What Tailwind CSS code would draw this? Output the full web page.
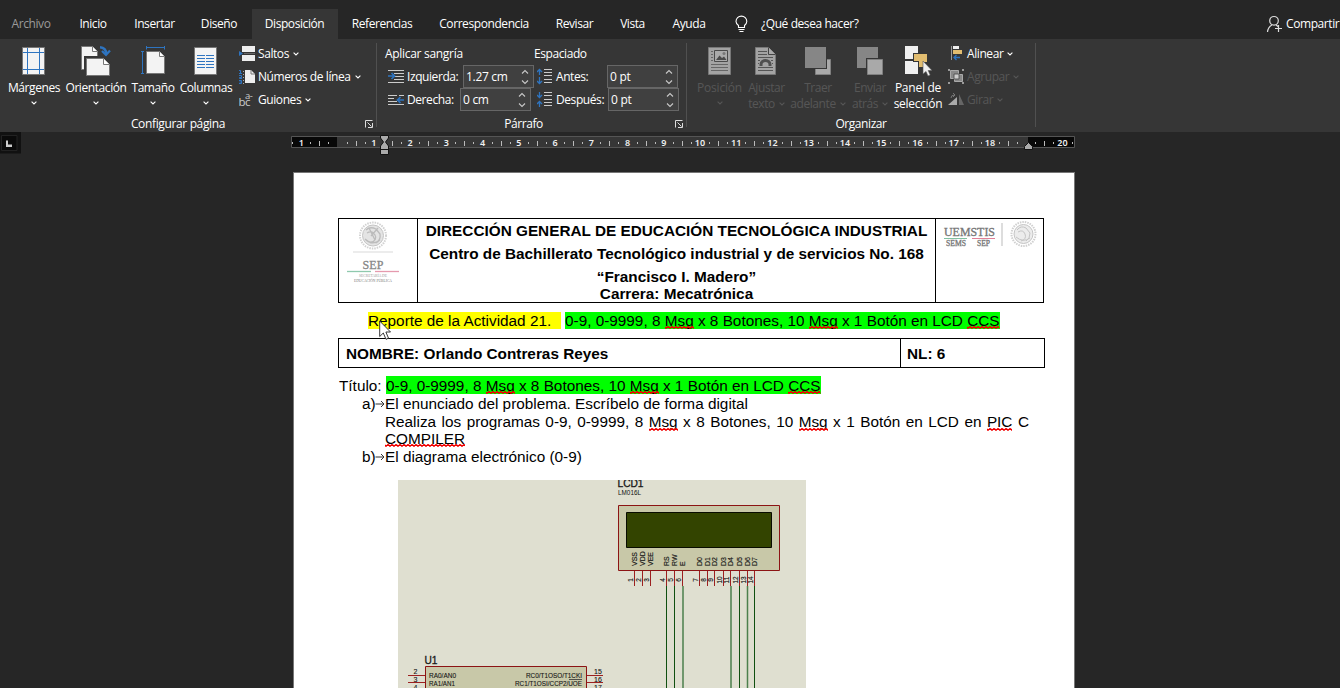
<!DOCTYPE html>
<html lang="es">
<head>
<meta charset="utf-8">
<title>Documento</title>
<script src="https://cdn.jsdelivr.net/npm/@tailwindcss/browser@4"></script>
</head>
<body class="h-[688px] w-[1340px] overflow-hidden bg-[#262626] font-['Open_Sans','Noto_Sans',sans-serif] text-[12px] leading-[16px] tracking-[-0.42px] text-white">
<svg width="0" height="0" class="absolute"><defs>
<symbol id="chev" viewBox="0 0 6 4"><path d="M.6 .6L3 3L5.4 .6" fill="none" stroke="currentColor" stroke-width="1.1"/></symbol>
<symbol id="launch" viewBox="0 0 8 8"><path d="M.5 7.500V.5H7.500M2.500 2.500L6.500 6.500M7.500 3V7.500H3" fill="none" stroke="#ddd"/></symbol>
<symbol id="spin" viewBox="0 0 8 16"><path d="M1 4.500L4 1.500L7 4.500M1 11.500L4 14.500L7 11.500" fill="none" stroke="#c8c8c8" stroke-width="1.1"/></symbol>
<pattern id="wave" width="4" height="3" patternUnits="userSpaceOnUse"><path d="M-1 0L1 2.400L3 .4L5 2.400" fill="none" stroke="#f00000" stroke-width="1.2"/></pattern>
</defs></svg>

<!-- Pestañas -->
<nav class="flex h-[39px] items-stretch pt-[9px] text-center leading-[30px] whitespace-nowrap">
<div class="mr-[2px] w-[63px] pr-px text-[#9a9a9a]">Archivo</div>
<div class="w-[57px] pr-px">Inicio</div>
<div class="w-[65px]">Insertar</div>
<div class="w-[65px] pr-px">Diseño</div>
<div class="w-[86px] bg-[#363636] pr-px">Disposición</div>
<div class="w-[88px]">Referencias</div>
<div class="w-[116px]">Correspondencia</div>
<div class="w-[65px]">Revisar</div>
<div class="w-[51px]">Vista</div>
<div class="w-[62px]">Ayuda</div>
<svg class="ml-[14px] mt-[6px] h-[18px] w-[14px] shrink-0" viewBox="734 15 14 18" fill="none" stroke="#fff" stroke-width="1.1"><path d="M738.500 27.500V25.500Q736 23.500 736 21.500A5.300 5.300 0 0 1 746.800 21.500Q746.800 23.500 744.500 25.500V27.500ZM738.500 29.500H744.500M739.500 31.500H743.500"/></svg>
<div class="ml-[13px]">¿Qué desea hacer?</div>
<div class="ml-auto flex w-[74px]">
<svg class="mt-[6px] h-[18px] w-[16px] shrink-0" viewBox="1266 15 16 18" fill="none" stroke="#ddd" stroke-width="1.2"><circle cx="1274" cy="20.800" r="4.300"/><path d="M1267.500 32Q1268 27 1272 25M1276 25L1278 26.500M1275 28.500H1282M1278.500 25V32"/></svg>
<div class="ml-[4px]">Compartir</div>
</div>
</nav>

<!-- Cinta -->
<section class="flex h-[93px] bg-[#363636] whitespace-nowrap">
<div class="relative flex w-[377px] flex-col">
<div class="flex h-[76px] pl-[5px]">
<div class="flex w-[58px] flex-col items-center pt-[5px]">
<svg class="h-[34px] w-[28px]" viewBox="20 44 28 34"><path d="M22.500 47.500H44.500V74.500H22.500Z" fill="#f3f3f3" stroke="#777"/><path d="M27.500 48V74M39.500 48V74M23 52.500H44M23 69.500H44" stroke="#2e74c0"/></svg>
<span class="mt-[2px]">Márgenes</span><svg class="mt-[5px] h-[4px] w-[6px]"><use href="#chev"/></svg></div>
<div class="flex w-[66px] flex-col items-center pt-[5px]">
<svg class="h-[34px] w-[34px]" viewBox="79 44 34 34"><path d="M81.500 46.500H92.500L97.500 51.500V69.500H81.500Z" fill="#f3f3f3" stroke="#777"/><path d="M92.500 46.500V51.500H97.500" fill="#fff" stroke="#777"/><path d="M85.500 57.500H104.500L110.500 63.500V76.500H85.500Z" fill="#f3f3f3" stroke="#363636" stroke-width="3"/><path d="M86.500 58.500H103.500L109.500 64.500V75.500H86.500Z" fill="#f3f3f3" stroke="#777"/><path d="M103.500 58.500V64.500H109.500" fill="#fff" stroke="#777"/><path d="M100 47.200Q106 47.500 106.200 54" fill="none" stroke="#2e74c0" stroke-width="2.600"/><path d="M102 51L106 55L110 50.500" fill="none" stroke="#2e74c0" stroke-width="2.200"/></svg>
<span class="mt-[2px]">Orientación</span><svg class="mt-[5px] h-[4px] w-[6px]"><use href="#chev"/></svg></div>
<div class="flex w-[48px] flex-col items-center pt-[5px]">
<svg class="h-[34px] w-[28px]" viewBox="139 44 28 34"><path d="M146.500 51.500H159.500L164.500 56.500V73.500H146.500Z" fill="#f3f3f3" stroke="#777"/><path d="M159.500 51.500V56.500H164.500" fill="#fff" stroke="#777"/><path d="M146.500 46V49.500M164.500 46V49.500M146 47.500H165M141 51.500H144M141 73.500H144M142.500 51V74" stroke="#2e74c0" fill="none"/></svg>
<span class="mt-[2px]">Tamaño</span><svg class="mt-[5px] h-[4px] w-[6px]"><use href="#chev"/></svg></div>
<div class="flex w-[58px] flex-col items-center pt-[5px]">
<svg class="h-[34px] w-[28px]" viewBox="192 44 28 34"><path d="M194.500 47.500H216.500V74.500H194.500Z" fill="#f3f3f3" stroke="#777"/><path d="M197 55.500H205M206 55.500H214M197 58.500H205M206 58.500H214M197 61.500H205M206 61.500H214M197 64.500H205M206 64.500H214M197 67.500H205M206 67.500H214" stroke="#2e74c0"/></svg>
<span class="mt-[2px]">Columnas</span><svg class="mt-[5px] h-[4px] w-[6px]"><use href="#chev"/></svg></div>
<div class="ml-[4px] flex flex-col pt-[3px]">
<div class="flex h-[23px] items-center"><svg class="h-[18px] w-[17px]" viewBox="239 44 17 18"><path d="M242 45H255V51H242ZM242 54H255V60H242Z" fill="#eee"/><path d="M239 50L243 52.500L239 55Z" fill="#2e74c0"/><path d="M244 52.500H255" stroke="#666"/></svg><span class="ml-[2px]">Saltos</span><svg class="ml-[4px] h-[4px] w-[6px]"><use href="#chev"/></svg></div>
<div class="flex h-[23px] items-center"><svg class="h-[18px] w-[17px]" viewBox="239 67 17 18"><path d="M245 69H251L255 73V82H245Z" fill="#eee"/><path d="M251 69V73H255" fill="none" stroke="#777"/><path d="M239 69.500H240.500V73M239 72.500H242M239 74.500H241.500V76.500H239.500V77.500H242M239 79.500H241.500V82.500H239M239.500 81H241" fill="none" stroke="#2e74c0"/><path d="M243.500 70V83" stroke="#aaa" stroke-dasharray="1 2"/></svg><span class="ml-[2px]">Números de línea</span><svg class="ml-[4px] h-[4px] w-[6px]"><use href="#chev"/></svg></div>
<div class="flex h-[23px] items-center"><svg class="h-[18px] w-[17px]" viewBox="239 90 17 18" fill="#ccc" font-family="Open Sans"><text x="238.500" y="105" font-size="11.500">bc</text><text x="245" y="98" font-size="9.500">a-</text></svg><span class="ml-[2px]">Guiones</span><svg class="ml-[4px] h-[4px] w-[6px]"><use href="#chev"/></svg></div>
</div>
</div>
<div class="flex h-[17px] items-center"><span class="w-[356px] text-center tracking-[-0.36px]">Configurar página</span><svg class="ml-[9px] h-[8px] w-[8px]"><use href="#launch"/></svg></div>
<div class="absolute right-0 top-[4px] h-[84px] w-px bg-[#505050]"></div>
</div>

<div class="relative flex w-[310px] flex-col">
<div class="flex h-[76px] pl-[8px] pt-[3px]">
<div class="w-[149px]">
<div class="h-[23px] leading-[23px] tracking-[-0.3px]">Aplicar sangría</div>
<div class="flex h-[23px] items-center pl-[3px]"><svg class="h-[16px] w-[17px]" viewBox="388 68 17 16"><path d="M388 69.500H404M394 72.500H404M394 75.500H404M394 78.500H404M388 81.500H404" stroke="#ccc"/><path d="M388 75H394M391.500 72L394.500 75L391.500 78" fill="none" stroke="#2e74c0" stroke-width="1.700"/></svg><span class="ml-[2px] w-[56px]">Izquierda:</span><span class="flex h-[23px] w-[71px] items-center justify-between border border-[#666] bg-[#404040] pl-[2px] pr-[4px] tracking-[-0.3px]"><span>1.27 cm</span><svg class="h-[16px] w-[8px]"><use href="#spin"/></svg></span></div>
<div class="flex h-[23px] items-center pl-[3px]"><svg class="h-[16px] w-[17px]" viewBox="388 91 17 16"><path d="M388 94.500H397M388 97.500H394M388 100.500H397M388 103.500H404M399 94.500H404" stroke="#ccc"/><path d="M398 99H404M400.500 96L397.500 99L400.500 102" fill="none" stroke="#2e74c0" stroke-width="1.700"/></svg><span class="ml-[2px] w-[53px]">Derecha:</span><span class="flex h-[23px] w-[71px] items-center justify-between border border-[#666] bg-[#404040] pl-[2px] pr-[4px] tracking-[-0.3px]"><span>0 cm</span><svg class="h-[16px] w-[8px]"><use href="#spin"/></svg></span></div>
</div>
<div class="w-[150px]">
<div class="h-[23px] leading-[23px]">Espaciado</div>
<div class="flex h-[23px] items-center pl-[3px]"><svg class="h-[18px] w-[17px]" viewBox="537 67 17 18"><path d="M544 68.500H552M544 71.500H552M544 74.500H552M544 78.500H552M544 81.500H552" stroke="#ccc"/><path d="M539.500 74V68M537 71L539.500 68.500L542 71M539.500 76V83M537 80L539.500 82.500L542 80" fill="none" stroke="#2e74c0" stroke-width="1.300"/></svg><span class="ml-[2px] w-[51px]">Antes:</span><span class="flex h-[23px] w-[71px] items-center justify-between border border-[#666] bg-[#404040] pl-[2px] pr-[4px] tracking-[-0.3px]"><span>0 pt</span><svg class="h-[16px] w-[8px]"><use href="#spin"/></svg></span></div>
<div class="flex h-[23px] items-center pl-[3px]"><svg class="h-[18px] w-[17px]" viewBox="537 90 17 18"><path d="M544 91.500H552M544 94.500H552M544 98.500H552M544 101.500H552M544 104.500H552" stroke="#ccc"/><path d="M539.500 91V97M537 94L539.500 96.500L542 94M539.500 106V100M537 103L539.500 100.500L542 103" fill="none" stroke="#2e74c0" stroke-width="1.300"/></svg><span class="ml-[2px] w-[52px]">Después:</span><span class="flex h-[23px] w-[71px] items-center justify-between border border-[#666] bg-[#404040] pl-[2px] pr-[4px] tracking-[-0.3px]"><span>0 pt</span><svg class="h-[16px] w-[8px]"><use href="#spin"/></svg></span></div>
</div>
</div>
<div class="flex h-[17px] items-center"><span class="w-[293px] text-center">Párrafo</span><svg class="ml-[5px] h-[8px] w-[8px]"><use href="#launch"/></svg></div>
<div class="absolute right-0 top-[4px] h-[84px] w-px bg-[#505050]"></div>
</div>

<div class="relative flex w-[349px] flex-col">
<div class="flex h-[76px] pl-[8px] text-[#565656]">
<div class="flex w-[49px] flex-col items-center pt-[5px]">
<svg class="h-[34px] w-[28px]" viewBox="706 44 28 34"><path d="M708.500 47.500H730.500V74.500H708.500Z" fill="#a3a3a3" stroke="#787878"/><path d="M714.500 50.500H727.500V61.500H714.500Z" fill="#aaa" stroke="#4a4a4a"/><path d="M716 60L719.500 55.500L722 58L724 56.500L726.500 60Z" fill="#4a4a4a"/><circle cx="724" cy="53.500" r="1.500" fill="#777"/><path d="M711 51.500H713M711 54.500H713M711 57.500H713M711 60.500H713M711 64.500H728M711 67.500H728M711 70.500H728" stroke="#666"/></svg>
<span class="mt-[2px] tracking-[-0.2px]">Posición</span><svg class="mt-[5px] h-[4px] w-[6px]"><use href="#chev"/></svg></div>
<div class="flex w-[45px] flex-col items-center pt-[5px]">
<svg class="h-[34px] w-[28px]" viewBox="753 44 28 34"><path d="M755.500 47.500H768.500L775.500 54.500V74.500H755.500Z" fill="#a3a3a3" stroke="#787878"/><path d="M768.500 47.500V54.500H775.500" fill="#aaa" stroke="#444"/><path d="M758 51.500H767M758 54.500H767M758 57.500H773M758 60.500H760M771 60.500H773M758 63.500H759M772 63.500H773M758 67.500H773M758 70.500H773" stroke="#555"/><path d="M761 66V64.500A4.500 4 0 0 1 770 64.500V66" fill="none" stroke="#505050" stroke-width="3"/></svg>
<span class="mt-[2px]">Ajustar</span><span class="flex items-center gap-[4px]">texto<svg class="h-[4px] w-[6px]"><use href="#chev"/></svg></span></div>
<div class="flex w-[58px] flex-col items-center pt-[5px]">
<svg class="h-[34px] w-[28px]" viewBox="804 44 28 34"><path d="M815.500 59.500H830.500V74.500H815.500Z" fill="#a9a9a9" stroke="#808080"/><path d="M804 46H827V69H804Z" fill="#363636"/><path d="M805 47H826V68H805Z" fill="#868686"/></svg>
<span class="mt-[2px]">Traer</span><span class="flex items-center gap-[4px]">adelante<svg class="h-[4px] w-[6px]"><use href="#chev"/></svg></span></div>
<div class="flex w-[46px] flex-col items-center pt-[5px]">
<svg class="h-[34px] w-[28px]" viewBox="856 44 28 34"><path d="M857 47H878V68H857Z" fill="#868686"/><path d="M866 58H884V76H866Z" fill="#363636"/><path d="M867.500 59.500H882.500V74.500H867.500Z" fill="#a9a9a9" stroke="#808080"/></svg>
<span class="mt-[2px]">Enviar</span><span class="flex items-center gap-[4px]">atrás<svg class="h-[4px] w-[6px]"><use href="#chev"/></svg></span></div>
<div class="flex w-[50px] flex-col items-center pt-[5px] text-white">
<svg class="h-[34px] w-[28px]" viewBox="904 44 28 34"><path d="M905 46H918V59H905ZM905 61H918V74H905Z" fill="#f0f0f0"/><path d="M913 53H928V63H925V68H918V62H913Z" fill="#363636"/><path d="M914 54H927V62H924V67H919V61H914Z" fill="#e2bd70"/><path d="M923 61V74L926 71.500L928 76L930.200 75L928.200 70.500H932Z" fill="#f0f0f0" stroke="#555" stroke-width=".6"/></svg>
<span class="mt-[2px] tracking-[-0.25px]">Panel de</span><span class="tracking-[-0.3px]">selección</span></div>
<div class="ml-[5px] flex flex-col pt-[3px]">
<div class="flex h-[23px] items-center text-white"><svg class="h-[18px] w-[17px]" viewBox="948 45 17 18"><path d="M951.500 46V60" stroke="#999"/><path d="M953 46H959V49H953Z" fill="#eee"/><path d="M953 50H962V54H953Z" fill="#e2bd70"/><path d="M954 57.500H960M956.500 55L954 57.500L956.500 60" fill="none" stroke="#2e74c0" stroke-width="1.300"/></svg><span class="ml-[2px]">Alinear</span><svg class="ml-[4px] h-[4px] w-[6px]"><use href="#chev"/></svg></div>
<div class="flex h-[23px] items-center"><svg class="h-[18px] w-[17px]" viewBox="948 67 17 18"><path d="M948 68H950V70H948ZM962 68H964V70H962ZM948 81H950V83H948ZM962 81H964V83H962Z" fill="#999"/><path d="M950.500 69.500H958.500V77.500H950.500Z" fill="#888" stroke="#aaa"/><path d="M954.500 73.500H962.500V80.500H954.500Z" fill="#888" stroke="#aaa"/><path d="M954 73H959V78H954Z" fill="#ccc" stroke="#444" stroke-width=".8"/></svg><span class="ml-[2px]">Agrupar</span><svg class="ml-[4px] h-[4px] w-[6px]"><use href="#chev"/></svg></div>
<div class="flex h-[23px] items-center"><svg class="h-[18px] w-[17px]" viewBox="948 90 17 18"><path d="M948 104L957 96V104Z" fill="#aaa"/><path d="M959 93V104H964Z" fill="#666"/><path d="M951 97Q951 94 954.500 94M953 92L955 94L953 96" fill="none" stroke="#777"/></svg><span class="ml-[2px]">Girar</span><svg class="ml-[4px] h-[4px] w-[6px]"><use href="#chev"/></svg></div>
</div>
</div>
<div class="flex h-[17px] items-center"><span class="w-[348px] text-center">Organizar</span></div>
<div class="absolute right-0 top-[4px] h-[84px] w-px bg-[#505050]"></div>
</div>
</section>

<!-- Regla -->
<div class="flex h-[40px] items-start">
<svg class="h-[24px] w-[22px]" viewBox="0 132 22 24"><path d="M0 132H21V153.500H0Z" fill="#111"/><path d="M1.500 135.500H17V150.500H1.500Z" fill="#0a0a0a" stroke="#222"/><path d="M6 140.500H8V144.500H12V147H6Z" fill="#ccc"/></svg>
<svg class="ml-[268px] h-[26px] w-[790px] tracking-normal" viewBox="290 132 790 26" font-family="Noto Sans" font-size="9" font-weight="600" fill="#f0f0f0" text-anchor="middle">
<path d="M291.500 136.500H1074.500V147.500H291.500Z" fill="#363636" stroke="#555"/>
<path d="M292 137H337V147H292ZM1028 137H1074V147H1028Z" fill="#080808"/>
<g id="ticks"></g>
<path d="M380.500 135.500H388.500V138L385.500 142L388.500 146V154.500H380.500V146L383.500 142L380.500 138Z" fill="#aaa" stroke="#111"/><path d="M380 149.500H389" stroke="#111"/>
<path d="M1024.500 149.500V146.500L1028.500 142.500L1032.500 146.500V149.500Z" fill="#aaa" stroke="#111"/>
</svg>
</div>

<!-- Página -->
<main class="ml-[293px] flex h-[516px] w-[782px] flex-col overflow-hidden border border-b-0 border-[#777] bg-white pl-[44px] pt-[45px] font-['Liberation_Sans',Arial,sans-serif] text-[15.33px] leading-[18px] tracking-normal whitespace-nowrap text-black">
<div class="flex h-[85px] w-[706px] shrink-0 border border-black">
<svg class="h-[83px] w-[78px] shrink-0" viewBox="339 219 78 83" text-anchor="middle" font-family="Liberation Serif">
<g fill="none" stroke="#c4c4c4"><circle cx="373" cy="235.500" r="13" stroke="#d2d2d2" stroke-width="2" stroke-dasharray="1.500 1"/><circle cx="373" cy="235.500" r="10.500" fill="#e4e4e4"/><path d="M366 230Q370 226 376 229L380 234Q381 240 376 243M367 233Q372 230 375 235T370 243M365 239Q372 246 380 240M369 228L375 240M378 228L371 236" stroke="#bcbcbc" stroke-width="1.300"/></g>
<path d="M353 252H393" stroke="#ececec" stroke-width="2"/>
<text x="373" y="269" font-size="12" fill="#888" stroke="#888" stroke-width=".3" textLength="21">SEP</text>
<path d="M347 271.500H371" stroke="#8fc9ad" stroke-width="1.300"/><path d="M375 271.500H399" stroke="#e59aae" stroke-width="1.300"/>
<text x="373" y="277" font-size="4" fill="#999" textLength="28" lengthAdjust="spacingAndGlyphs">SECRETARÍA DE</text><text x="373" y="281.500" font-size="4" fill="#777" textLength="38" lengthAdjust="spacingAndGlyphs">EDUCACIÓN PÚBLICA</text>
</svg>
<div class="flex w-[519px] shrink-0 flex-col items-center border-x border-black font-bold">
<div class="mt-[3px]">DIRECCIÓN GENERAL DE EDUCACIÓN TECNOLÓGICA INDUSTRIAL</div>
<div class="mt-[5px]">Centro de Bachillerato Tecnológico industrial y de servicios No. 168</div>
<div class="mt-[5px]">“Francisco I. Madero”</div>
<div class="-mt-px">Carrera: Mecatrónica</div>
</div>
<svg class="h-[83px] w-[107px] shrink-0" viewBox="936 219 107 83" font-family="Liberation Serif" fill="#777">
<text x="944" y="235.500" font-size="11.500" stroke="#777" stroke-width=".3" textLength="51" lengthAdjust="spacingAndGlyphs">UEMSTIS</text><path d="M944 238.500H967" stroke="#80c0a0"/><path d="M972 238.500H995" stroke="#e08098"/>
<text x="946" y="246" font-size="7.500" stroke="#777" stroke-width=".3" textLength="20" lengthAdjust="spacingAndGlyphs">SEMS</text><text x="977" y="246" font-size="7.500" stroke="#777" stroke-width=".3" textLength="13" lengthAdjust="spacingAndGlyphs">SEP</text>
<path d="M1002 223V246" stroke="#bbb"/>
<g fill="none" stroke="#c4c4c4"><circle cx="1023.500" cy="234" r="12" stroke="#d0d0d0" stroke-width="2" stroke-dasharray="1.500 1"/><circle cx="1023.500" cy="234" r="9.500" fill="#ececec"/><path d="M1017 230Q1021 225 1026 228L1030 233Q1030 239 1026 241M1018 232Q1023 229 1025 234T1021 241M1016 237Q1023 243 1030 238"/></g>
</svg>
</div>
<div class="mt-[9px] flex h-[18px] pl-[30px]"><span class="h-[17px] w-[193px] bg-[#ff0]">Reporte de la Actividad 21.</span><span class="ml-[4px] h-[17px] w-[435px] bg-[#0f0]">0-9, 0-9999, 8 <u class="relative no-underline">Msg<svg class="absolute bottom-0 left-0 h-[3px] w-full"><rect width="100%" height="3" fill="url(#wave)"/></svg></u> x 8 Botones, 10 <u class="relative no-underline">Msg<svg class="absolute bottom-0 left-0 h-[3px] w-full"><rect width="100%" height="3" fill="url(#wave)"/></svg></u> x 1 Botón en LCD <u class="relative no-underline">CCS<svg class="absolute bottom-0 left-0 h-[3px] w-full"><rect width="100%" height="3" fill="url(#wave)"/></svg></u></span></div>
<div class="mt-[8px] flex h-[30px] w-[707px] shrink-0 border border-black font-bold leading-[30px]"><div class="w-[562px] border-r border-black pl-[7px]">NOMBRE: Orlando Contreras Reyes</div><div class="pl-[6px]">NL: 6</div></div>
<div class="mt-[8px] flex h-[19px] pl-px leading-[20px]"><span class="w-[47px]">Título:</span><span class="h-[18px] w-[435px] bg-[#0f0]">0-9, 0-9999, 8 <u class="relative no-underline">Msg<svg class="absolute bottom-0 left-0 h-[3px] w-full"><rect width="100%" height="3" fill="url(#wave)"/></svg></u> x 8 Botones, 10 <u class="relative no-underline">Msg<svg class="absolute bottom-0 left-0 h-[3px] w-full"><rect width="100%" height="3" fill="url(#wave)"/></svg></u> x 1 Botón en LCD <u class="relative no-underline">CCS<svg class="absolute bottom-0 left-0 h-[3px] w-full"><rect width="100%" height="3" fill="url(#wave)"/></svg></u></span></div>
<div class="flex h-[18px] items-center pl-[24px]"><span class="w-[13px]">a)</span><svg class="h-[8px] w-[10px]" viewBox="0 0 10 8"><path d="M.5 4H9M6 1L9 4L6 7" fill="none" stroke="#333"/></svg><span>El enunciado del problema. Escríbelo de forma digital</span></div>
<div class="flex h-[18px] w-[644px] justify-between self-start ml-[47px]"><span>Realiza</span><span>los</span><span>programas</span><span>0-9,</span><span>0-9999,</span><span>8</span><u class="relative no-underline">Msg<svg class="absolute bottom-0 left-0 h-[3px] w-full"><rect width="100%" height="3" fill="url(#wave)"/></svg></u><span>x</span><span>8</span><span>Botones,</span><span>10</span><u class="relative no-underline">Msg<svg class="absolute bottom-0 left-0 h-[3px] w-full"><rect width="100%" height="3" fill="url(#wave)"/></svg></u><span>x</span><span>1</span><span>Botón</span><span>en</span><span>LCD</span><span>en</span><u class="relative no-underline">PIC<svg class="absolute bottom-0 left-0 h-[3px] w-full"><rect width="100%" height="3" fill="url(#wave)"/></svg></u><span>C</span></div>
<div class="h-[17px] pl-[47px] leading-[15px]"><u class="relative no-underline">COMPILER<svg class="absolute bottom-0 left-0 h-[3px] w-full"><rect width="100%" height="3" fill="url(#wave)"/></svg></u></div>
<div class="flex h-[18px] items-center pl-[24px]"><span class="w-[13px]">b)</span><svg class="h-[8px] w-[10px]" viewBox="0 0 10 8"><path d="M.5 4H9M6 1L9 4L6 7" fill="none" stroke="#333"/></svg><span>El diagrama electrónico (0-9)</span></div>
<svg class="ml-[60px] mt-[14px] h-[208px] w-[408px] shrink-0" viewBox="398 480 408 208" font-family="Liberation Sans" fill="#111">
<path d="M398 480H806V688H398Z" fill="#dfdfd0"/>
<text x="617.500" y="487" font-size="10.500" stroke="#222" stroke-width=".3" textLength="26" lengthAdjust="spacingAndGlyphs">LCD1</text><text x="618" y="495" font-size="6.500" textLength="23" lengthAdjust="spacingAndGlyphs">LM016L</text>
<path d="M618.500 505.500H779.500V570.500H618.500Z" fill="#c8c8a8" stroke="#8c1414"/><path d="M626.500 512.500H771.500V547.500H626.500Z" fill="#334400" stroke="#080c00"/>
<path d="M634.500 571V586M642.500 571V586M650.500 571V586M666.500 571V586M674.500 571V586M682.500 571V586M699.500 571V586M707.500 571V586M714.500 571V586M723.500 571V586M730.500 571V586M739.500 571V586M747.500 571V586M754.500 571V586" stroke="#9c2020"/>
<path d="M666.500 586V688M674.500 586V688M739.500 586V688M754.500 586V688" stroke="#105010"/><path d="M683 586V688M731 586V688M747.500 586V688" stroke="#4c804c" stroke-width="1.500"/>
<g id="pins" font-size="7" stroke="#222" stroke-width=".15"></g>
<text x="424.500" y="664" font-size="10.500" stroke="#222" stroke-width=".3" textLength="13" lengthAdjust="spacingAndGlyphs">U1</text>
<path d="M425.500 666.500H586.500V700H425.500Z" fill="#c8c8a8" stroke="#8c1414"/>
<path d="M408 675.500H425M408 682.500H425M587 675.500H603M587 682.500H603" stroke="#9c2020"/>
<g font-size="7" stroke="#222" stroke-width=".1"><text x="429" y="678" textLength="27" lengthAdjust="spacingAndGlyphs">RA0/AN0</text><text x="429" y="685.500" textLength="26" lengthAdjust="spacingAndGlyphs">RA1/AN1</text><text x="526" y="678" textLength="56" lengthAdjust="spacingAndGlyphs">RC0/T1OSO/T1CKI</text><text x="515" y="685.500" textLength="67" lengthAdjust="spacingAndGlyphs">RC1/T1OSI/CCP2/UOE</text><path d="M569 679.500H582" stroke="#333" stroke-width=".8"/>
<text x="413.500" y="674">2</text><text x="413.500" y="682">3</text><text x="413.500" y="690">4</text><text x="594" y="674">15</text><text x="594" y="682">16</text><text x="594" y="690">17</text></g>
</svg>
</main>

<!-- Puntero -->
<svg class="absolute left-[379px] top-[320px] h-[21px] w-[14px]" viewBox="0 0 14 21"><path d="M.7 1V16.500L4.300 13L7 19.300L9.500 18.200L6.900 12H11.500Z" fill="#fff" stroke="#222" stroke-width=".9"/></svg>

<script>
const cm = 36.25, zero = 337.5;
let t = '';
for (let n = -1; n <= 20; n++) {
  const x = zero + n * cm;
  if (n !== 0 && n !== 19) t += `<text x="${x}" y="145.5">${Math.abs(n)}</text>`;
  for (const [d, a, b] of [[-0.25, 142, 144], [0.25, 142, 144], [0.5, 141, 146]]) {
    const p = Math.round(x + d * cm) + 0.5;
    if (p > 292 && p < 1073 && Math.abs(p - 384) > 6 && Math.abs(p - 1028) > 5) t += `<path d="M${p} ${a}V${b}" stroke="#bbb"/>`;
  }
}
document.getElementById('ticks').innerHTML = t;
const pins = [[634,'VSS',1],[642,'VDD',2],[650,'VEE',3],[666,'RS',4],[674,'RW',5],[682,'E',6],[699,'D0',7],[707,'D1',8],[714,'D2',9],[723,'D3',10],[730,'D4',11],[739,'D5',12],[747,'D6',13],[754,'D7',14]];
document.getElementById('pins').innerHTML = pins.map(([x, n, k]) =>
  `<text transform="translate(${x + 3} 566) rotate(-90)">${n}</text><text text-anchor="middle" font-size="6.5" transform="translate(${x - 1} 580) rotate(-90)">${k}</text>`).join('');
</script>
</body>
</html>
